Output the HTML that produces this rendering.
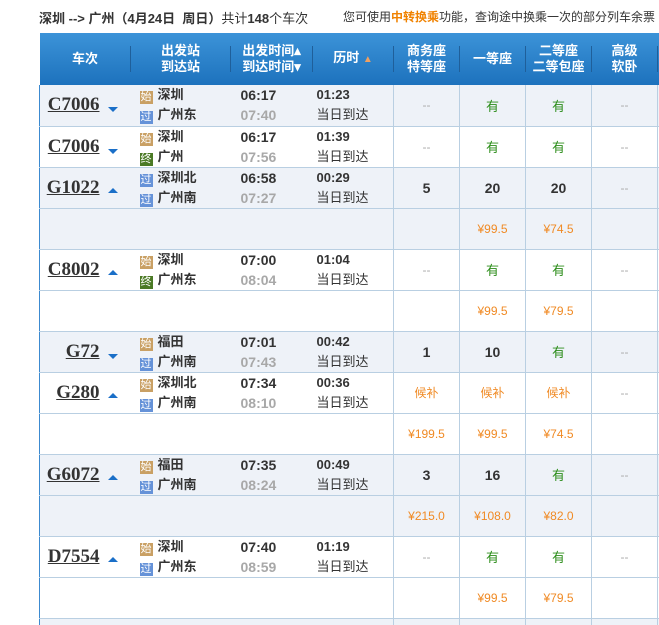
<!DOCTYPE html>
<html><head><meta charset="utf-8"><style>
*{margin:0;padding:0;box-sizing:border-box}
html,body{width:659px;height:625px;overflow:hidden}
body{background:#fff;font-family:"Liberation Sans","Noto Sans CJK SC","WenQuanYi Zen Hei",sans-serif;font-size:12px;color:#333;position:relative}
.top{position:absolute;top:8px;left:39px;font-size:13px;white-space:nowrap;color:#333}
.top b{font-weight:bold}
.top2{position:absolute;top:8px;left:343px;font-size:12px;white-space:nowrap;color:#333}
.top2 span{color:#f08200;font-weight:bold}
.wrap{position:absolute;left:0;top:0;width:659px;height:625px;overflow:hidden}
table{position:absolute;left:39px;top:33px;border-collapse:collapse;table-layout:fixed;width:640px}
th{height:52px;background:linear-gradient(#3c93d8,#1d72bd);color:#fff;font-size:13px;font-weight:bold;line-height:16px;position:relative;text-align:center}
th.s:after{content:"";position:absolute;right:0;top:13px;height:26px;border-right:1px solid #1f5f9a;box-shadow:1px 0 0 #5aa3dd}
td{height:41px;border-bottom:1px solid #b9cfe2;text-align:center;vertical-align:middle;overflow:hidden}
td.r{border-left:1px solid #b9cfe2}
tr.g td{background:#eef2f8}
.tn{text-align:right;padding-right:13px;white-space:nowrap;border-left:1px solid #3c8ad0}
.tn u{font-family:"Liberation Serif",serif;font-weight:bold;font-size:19px;color:#333}
.ar{display:inline-block;width:0;height:0;border-left:5px solid transparent;border-right:5px solid transparent;margin-left:8px;vertical-align:-2px}
.dn{border-top:5px solid #1a6fc8}
.up{border-bottom:5px solid #1a6fc8;vertical-align:0}
.st{text-align:left;padding-left:9px;line-height:20px;font-weight:bold;font-size:13px}
.bd{display:inline-block;width:13px;height:13px;font-size:11px;line-height:13px;color:#fff;text-align:center;margin-right:5px;vertical-align:-1px;font-weight:normal}
.b1{background:#c9a064}.b2{background:#6592d8}.b3{background:#4b7a25}
.tm{text-align:left;padding-left:10px;line-height:20px;font-weight:bold;font-size:14px}
.tm i{font-style:normal;color:#a8a8a8}
.du{text-align:left;padding-left:4px;line-height:20px;font-size:13px}
.y{color:#2c8d1a;font-size:13px}
.d{color:#aaa}
.n{font-weight:bold;font-size:14px}
.p{color:#f08a24;font-size:12px}
</style></head><body>
<div class="wrap">
<div class="top"><b>深圳 --&gt; 广州（4月24日&nbsp; 周日）</b>共计<b>148</b>个车次</div>
<div class="top2">您可使用<span>中转换乘</span>功能，查询途中换乘一次的部分列车余票</div>
<table>
<colgroup><col style="width:91px"><col style="width:100px"><col style="width:82px"><col style="width:81px"><col style="width:66px"><col style="width:66px"><col style="width:66px"><col style="width:66px"><col style="width:22px"></colgroup>
<tr><th class="s">车次</th><th class="s">出发站<br>到达站</th><th class="s">出发时间▴<br>到达时间▾</th><th class="s">历时 <span style="color:#f0a060;font-size:10px">▲</span></th><th class="s">商务座<br>特等座</th><th class="s">一等座</th><th class="s">二等座<br>二等包座</th><th class="s">高级<br>软卧</th><th></th></tr>
<tr class="g"><td class="tn"><u>C7006</u><span class="ar dn"></span></td><td class="st"><span class="bd b1">始</span>深圳<br><span class="bd b2">过</span>广州东</td><td class="tm">06:17<br><i>07:40</i></td><td class="du"><b>01:23</b><br>当日到达</td><td class="r d">--</td><td class="r y">有</td><td class="r y">有</td><td class="r d">--</td><td class="r"></td></tr>
<tr><td class="tn"><u>C7006</u><span class="ar dn"></span></td><td class="st"><span class="bd b1">始</span>深圳<br><span class="bd b3">终</span>广州</td><td class="tm">06:17<br><i>07:56</i></td><td class="du"><b>01:39</b><br>当日到达</td><td class="r d">--</td><td class="r y">有</td><td class="r y">有</td><td class="r d">--</td><td class="r"></td></tr>
<tr class="g"><td class="tn"><u>G1022</u><span class="ar up"></span></td><td class="st"><span class="bd b2">过</span>深圳北<br><span class="bd b2">过</span>广州南</td><td class="tm">06:58<br><i>07:27</i></td><td class="du"><b>00:29</b><br>当日到达</td><td class="r n">5</td><td class="r n">20</td><td class="r n">20</td><td class="r d">--</td><td class="r"></td></tr>
<tr class="g"><td class="tn"></td><td></td><td></td><td></td><td class="r"></td><td class="r p">¥99.5</td><td class="r p">¥74.5</td><td class="r"></td><td class="r"></td></tr>
<tr><td class="tn"><u>C8002</u><span class="ar up"></span></td><td class="st"><span class="bd b1">始</span>深圳<br><span class="bd b3">终</span>广州东</td><td class="tm">07:00<br><i>08:04</i></td><td class="du"><b>01:04</b><br>当日到达</td><td class="r d">--</td><td class="r y">有</td><td class="r y">有</td><td class="r d">--</td><td class="r"></td></tr>
<tr><td class="tn"></td><td></td><td></td><td></td><td class="r"></td><td class="r p">¥99.5</td><td class="r p">¥79.5</td><td class="r"></td><td class="r"></td></tr>
<tr class="g"><td class="tn"><u>G72</u><span class="ar dn"></span></td><td class="st"><span class="bd b1">始</span>福田<br><span class="bd b2">过</span>广州南</td><td class="tm">07:01<br><i>07:43</i></td><td class="du"><b>00:42</b><br>当日到达</td><td class="r n">1</td><td class="r n">10</td><td class="r y">有</td><td class="r d">--</td><td class="r"></td></tr>
<tr><td class="tn"><u>G280</u><span class="ar up"></span></td><td class="st"><span class="bd b1">始</span>深圳北<br><span class="bd b2">过</span>广州南</td><td class="tm">07:34<br><i>08:10</i></td><td class="du"><b>00:36</b><br>当日到达</td><td class="r p">候补</td><td class="r p">候补</td><td class="r p">候补</td><td class="r d">--</td><td class="r"></td></tr>
<tr><td class="tn"></td><td></td><td></td><td></td><td class="r p">¥199.5</td><td class="r p">¥99.5</td><td class="r p">¥74.5</td><td class="r"></td><td class="r"></td></tr>
<tr class="g"><td class="tn"><u>G6072</u><span class="ar up"></span></td><td class="st"><span class="bd b1">始</span>福田<br><span class="bd b2">过</span>广州南</td><td class="tm">07:35<br><i>08:24</i></td><td class="du"><b>00:49</b><br>当日到达</td><td class="r n">3</td><td class="r n">16</td><td class="r y">有</td><td class="r d">--</td><td class="r"></td></tr>
<tr class="g"><td class="tn"></td><td></td><td></td><td></td><td class="r p">¥215.0</td><td class="r p">¥108.0</td><td class="r p">¥82.0</td><td class="r"></td><td class="r"></td></tr>
<tr><td class="tn"><u>D7554</u><span class="ar up"></span></td><td class="st"><span class="bd b1">始</span>深圳<br><span class="bd b2">过</span>广州东</td><td class="tm">07:40<br><i>08:59</i></td><td class="du"><b>01:19</b><br>当日到达</td><td class="r d">--</td><td class="r y">有</td><td class="r y">有</td><td class="r d">--</td><td class="r"></td></tr>
<tr><td class="tn"></td><td></td><td></td><td></td><td class="r"></td><td class="r p">¥99.5</td><td class="r p">¥79.5</td><td class="r"></td><td class="r"></td></tr>
<tr class="g"><td class="tn"></td><td></td><td></td><td></td><td class="r"></td><td class="r"></td><td class="r"></td><td class="r"></td><td class="r"></td></tr>
</table>
</div>
</body></html>
